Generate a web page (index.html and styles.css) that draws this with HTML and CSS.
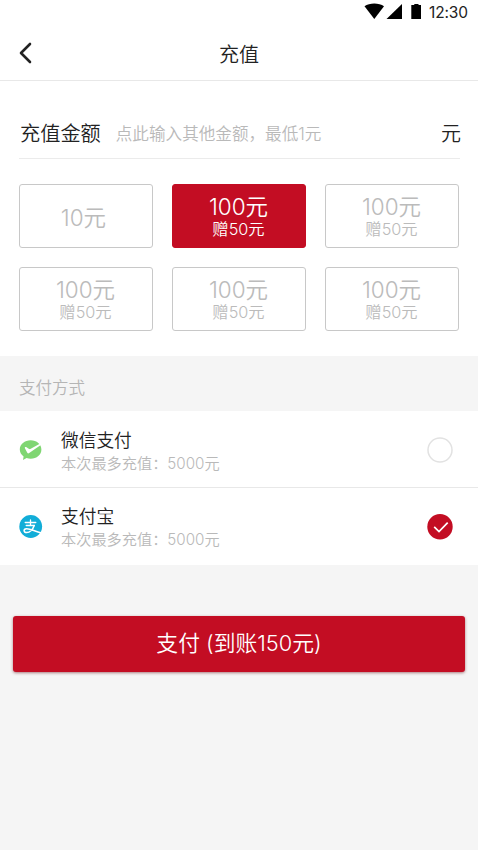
FILE: index.html
```html
<!DOCTYPE html>
<html lang="zh-CN">
<head>
<meta charset="utf-8">
<title>充值</title>
<link rel="stylesheet" href="styles.css">
</head>
<body>
<header class="top">
  <div class="status">
    <svg class="status-icons" width="60" height="18" viewBox="0 0 60 18">
      <path d="M.5 5.300C5.500 1.700 15 1.700 20 5.300L10.300 18z"/>
      <path d="M22.500 18 38 3V18z"/>
      <path d="M47.300 4h3V3h4.200v1H57V18H47.300V4z"/>
    </svg>
    <span class="time">12:30</span>
  </div>
  <div class="nav">
    <svg class="back" width="14" height="22" viewBox="0 0 14 22"><path d="M12 2 3 11l9 9"/></svg>
    <h1 class="title">充值</h1>
  </div>
</header>
<section class="recharge">
  <div class="amount">
    <span class="amount-label">充值金额</span>
    <span class="amount-hint">点此输入其他金额，最低1元</span>
    <span class="amount-unit">元</span>
  </div>
  <div class="options">
    <div class="option single"><b>10元</b></div>
    <div class="option selected"><b>100元</b><small>赠50元</small></div>
    <div class="option"><b>100元</b><small>赠50元</small></div>
    <div class="option"><b>100元</b><small>赠50元</small></div>
    <div class="option"><b>100元</b><small>赠50元</small></div>
    <div class="option"><b>100元</b><small>赠50元</small></div>
  </div>
</section>
<h2 class="section-title">支付方式</h2>
<section class="methods">
  <div class="method">
    <svg class="logo" width="24" height="24" viewBox="0 0 24 24">
      <path fill="#7fd672" d="M11.700 2.300c6 0 10.700 4 10.700 9.200s-4.700 9.200-10.700 9.200c-1.500 0-2.800-.2-4.100-.6L4 22.100l.6-3.700C2.300 16.800.8 14.300.8 11.500c0-5.200 4.900-9.200 10.900-9.200z"/>
      <path fill="#fff" d="M6 9.200c.4-.4 1-.4 1.500 0l2.600 1.900c.4.200.8.200 1.200 0L20.800 5.800l1 1.300L10.200 15.100c-.8.600-1.500.4-1.900-.3L5.900 10.300c-.2-.4-.2-.8.100-1.100z"/>
    </svg>
    <div class="info"><div class="name">微信支付</div><div class="limit">本次最多充值：5000元</div></div>
    <svg class="radio" width="26" height="26" viewBox="0 0 26 26"><circle cx="13" cy="13" r="12" fill="#fff" stroke="#e2e2e2" stroke-width="1.500"/></svg>
  </div>
  <div class="method">
    <svg class="logo" width="24" height="24" viewBox="0 0 24 24">
      <circle cx="11.700" cy="11.500" r="11.400" fill="#12add8"/>
      <g fill="none" stroke="#fff" stroke-linecap="round">
        <path stroke-width="1.300" d="M6.200 7.500h10.600M11.500 5v5.200M7.200 10.500h8.200"/>
        <path stroke-width="1.500" d="M15.200 10.600c-1.200 3.700-4.300 7-7.500 7-3.300 0-3.500-3.600-.3-3.900 4-.3 8.200 2.800 15 4.300"/>
      </g>
    </svg>
    <div class="info"><div class="name">支付宝</div><div class="limit">本次最多充值：5000元</div></div>
    <svg class="radio" width="26" height="26" viewBox="0 0 26 26"><circle cx="13" cy="12.800" r="12.700" fill="#c30d23"/><path d="M7.200 12.800 12 17.500 20.700 8.600" fill="none" stroke="#fff" stroke-width="1.700"/></svg>
  </div>
</section>
<div class="pay">支付 (到账150元)</div>
</body>
</html>
```
FILE: styles.css
```css
* { box-sizing: border-box; }
body {
  margin: 0;
  min-height: 850px;
  background: #f5f5f5;
  color: #222;
  font-family: Inter, "Noto Sans CJK SC", sans-serif;
  font-weight: 350;
}
svg { display: block; flex: none; }
.top { height: 81px; background: #fff; border-bottom: 1px solid #e8e8e8; }
.status {
  height: 26px;
  display: flex;
  justify-content: flex-end;
  padding-right: 10px;
}
.status-icons { margin-top: 1px; margin-right: 5px; overflow: visible; }
.time { font: 400 15.500px/26px Inter, sans-serif; letter-spacing: -.1px; color: #222; }
.nav { height: 54px; display: flex; align-items: center; padding-left: 18px; }
.back { fill: none; stroke: #222; stroke-width: 2.600; stroke-linecap: round; stroke-linejoin: round; }
.title { flex: 1; margin: 3px 32px 0 0; text-align: center; font-size: 20px; font-weight: 350; line-height: 30px; }
.recharge { height: 275px; padding: 26px 19px 0; background: #fff; }
.amount {
  height: 52px;
  display: flex;
  align-items: center;
  border-bottom: 1px solid #ebebeb;
  padding-left: 1px;
  margin-right: -1px;
}
.amount-label { font-size: 20.200px; }
.amount-hint { margin-left: 15px; font-size: 16.600px; color: #b9b9b9; }
.amount-unit { margin-left: auto; margin-right: -1px; font-size: 20px; }
.options {
  margin-top: 25px;
  display: grid;
  grid-template-columns: repeat(3, 134px);
  grid-auto-rows: 64px;
  gap: 19px;
}
.option {
  display: flex;
  flex-direction: column;
  align-items: center;
  justify-content: center;
  padding: 2px 1px 0 0;
  border: 1px solid #c8c8c8;
  border-radius: 3px;
  color: #bbb;
}
.option b { font-size: 22.500px; line-height: 24px; font-weight: 350; }
.option small { font-size: 16.300px; line-height: 20px; }
.single { padding: 3px 5px 0 0; }
.selected { background: #c30d23; border-color: #c30d23; color: #fff; }
.section-title { margin: 0; height: 55px; padding-left: 19px; font-size: 16.500px; line-height: 65px; font-weight: 350; color: #b5b5b5; }
.method {
  height: 76px;
  display: flex;
  align-items: center;
  padding: 2px 25px 0 19px;
  background: #fff;
}
.method + .method { height: 78px; padding-top: 0; border-top: 1px solid #e8e8e8; }
.info { flex: 1; margin-left: 18px; padding-top: 2px; }
.name { font-size: 17.700px; line-height: 25px; }
.limit { font-size: 15.200px; line-height: 22px; color: #b9b9b9; }
.pay {
  height: 56px;
  margin: 51px 13px 0;
  border-radius: 3px;
  background: #c30d23;
  box-shadow: 0 1px 3px rgba(100, 0, 10, .5);
  color: #fff;
  font-size: 21.800px;
  line-height: 54px;
  text-align: center;
}
```
